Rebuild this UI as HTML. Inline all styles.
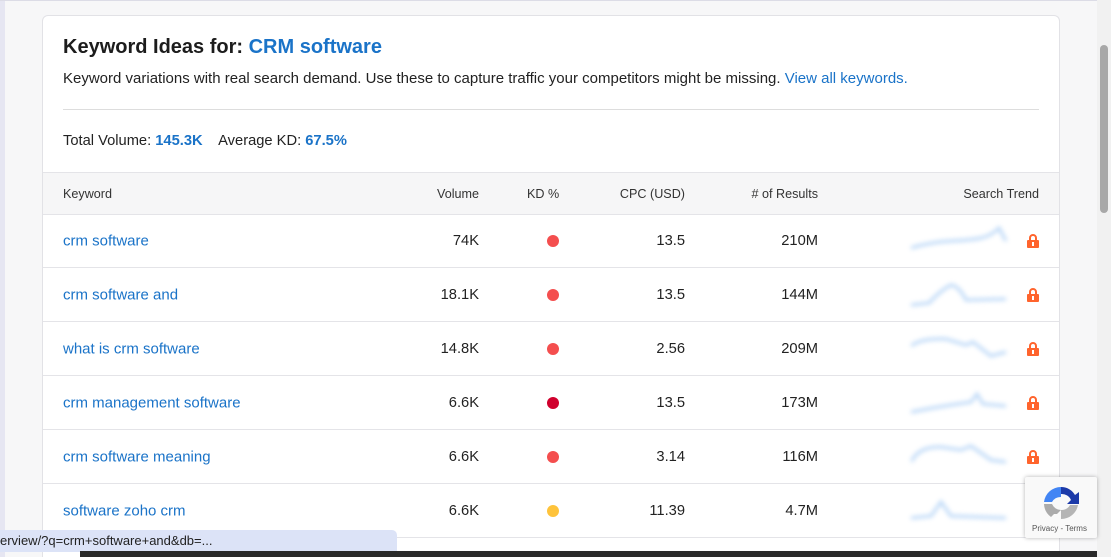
<!DOCTYPE html>
<html><head><style>
html,body{margin:0;width:1111px;height:557px;overflow:hidden}
body{background:#f7f7f8;font-family:"Liberation Sans",Arial,sans-serif;position:relative}
.lstrip{position:absolute;left:0;top:0;width:5px;height:557px;background:#e6e6f2}
.top{position:absolute;left:0;top:0;width:1097px;height:1px;background:#dcdce6}
.card{position:absolute;left:42px;top:15px;width:1016px;height:542px;background:#fff;border:1px solid #e2e2e6;border-bottom:none;border-radius:6px 6px 0 0;overflow:hidden}
h1{position:absolute;left:20px;top:20px;margin:0;font-size:20px;font-weight:bold;color:#1c1c1c}
h1 span{color:#1a73c8}
.sub{position:absolute;left:20px;top:54px;font-size:15px;color:#222}
.sub a{color:#1a73c8}
.hr{position:absolute;left:20px;right:20px;top:93px;height:1px;background:#ddd}
.tot{position:absolute;left:20px;top:117px;font-size:14.7px;color:#222}
.tot b{color:#1a73c8}
.th{position:absolute;left:0;right:0;top:156px;height:41px;background:#f6f6f7;border-top:1px solid #e4e4e8;border-bottom:1px solid #e4e4e8;font-size:12.6px;color:#333}
.row{position:absolute;left:0;right:0;height:53px;border-bottom:1px solid #e4e4e8;font-size:14.7px;color:#222}
.kw{font-size:15px}
.c{position:absolute;top:50%;transform:translateY(-50%)}
.kw{left:20px;color:#1a73c8}
.dot{width:12px;height:12px;border-radius:50%;position:absolute;left:504px;top:50%;transform:translateY(-50%)}
.lock{position:absolute;left:984px;top:50%;transform:translateY(-50%)}
.trend{position:absolute;left:868px;top:12px;filter:blur(2.5px);opacity:.8}
.sb{position:absolute;left:1097px;top:0;width:14px;height:557px;background:#f1f1f1}
.thumb{position:absolute;left:1100px;top:45px;width:8px;height:168px;background:#a8a8a8;border-radius:4px}
.status{position:absolute;left:0;top:530px;width:397px;height:22px;background:#dce3f7;border-radius:0 5px 0 0;font-size:13px;color:#222;line-height:22px}
.bar{position:absolute;left:80px;top:551px;width:1017px;height:6px;background:#2a2a2a}
.cap{position:absolute;left:1025px;top:477px;width:72px;height:61px;background:#f9f9f9;box-shadow:0 0 4px rgba(0,0,0,.3);border-radius:2px}
</style></head><body>
<div class="lstrip"></div><div class="top"></div>
<div class="card">
<h1>Keyword Ideas for: <span>CRM software</span></h1>
<div class="sub">Keyword variations with real search demand. Use these to capture traffic your competitors might be missing. <a>View all keywords.</a></div>
<div class="hr"></div>
<div class="tot">Total Volume: <b>145.3K</b>&nbsp;&nbsp;&nbsp; Average KD: <b>67.5%</b></div>
<div class="th">
<span class="c" style="left:20px">Keyword</span>
<span class="c" style="right:580px">Volume</span>
<span class="c" style="left:484px">KD %</span>
<span class="c" style="right:374px">CPC (USD)</span>
<span class="c" style="right:241px">&#35; of Results</span>
<span class="c" style="right:20px">Search Trend</span>
</div>
<div id="rows"></div>
</div>
<div class="sb"></div><div class="thumb"></div>
<div class="cap"><svg width="40" height="40" viewBox="0 0 40 40" style="position:absolute;left:16px;top:6px"><path d="M20 4a16 16 0 0 1 14 8l4-3v12H26l4-4a10 10 0 0 0-10-6z" fill="#1c3aa9"/><path d="M20 4v10a10 10 0 0 0-9 5H3A17 17 0 0 1 20 4z" fill="#4285f4"/><path d="M3 21h8a10 10 0 0 0 9 6l-4 4h-3l-3 3A17 17 0 0 1 3 21z" fill="#ababab"/><path d="M20 27a10 10 0 0 0 9-5h8a17 17 0 0 1-17 14z" fill="#b5b5b5"/></svg><div style="position:absolute;left:7px;top:47px;font-size:8px;color:#555">Privacy - Terms</div></div>
<div class="status">erview/?q=crm+software+and&amp;db=...</div>
<div class="bar"></div>
<script>
var d=[["crm software","74K","#f44e4e","13.5","210M","M0 22 Q20 16 40 15 T70 12 Q80 10 88 2 L95 15"],
["crm software and","18.1K","#f44e4e","13.5","144M","M0 25 L18 23 Q30 10 40 5 Q48 6 55 20 L95 19"],
["what is crm software","14.8K","#f44e4e","2.56","209M","M0 12 Q10 4 35 5 L55 11 L62 8 L80 22 L95 18"],
["crm management software","6.6K","#d0002d","13.5","173M","M0 24 Q20 20 40 17 L60 14 L66 6 L72 16 L95 18"],
["crm software meaning","6.6K","#f44e4e","3.14","116M","M0 20 Q8 4 30 5 L50 8 L60 4 L80 18 L95 20"],
["software zoho crm","6.6K","#fec33b","11.39","4.7M","M0 22 L20 20 L30 6 L40 20 L95 22"]];
var h="";d.forEach(function(r,i){h+='<div class="row" style="top:'+(198+54*i)+'px"><span class="c kw">'+r[0]+'</span><span class="c" style="right:580px">'+r[1]+'</span><div class="dot" style="background:'+r[2]+'"></div><span class="c" style="right:374px">'+r[3]+'</span><span class="c" style="right:241px">'+r[4]+'</span><svg class="trend" width="100" height="30"><path d="'+r[5]+'" fill="none" stroke="#a9cdf5" stroke-width="3"/></svg>'+(i<5?'<svg class="lock" width="12" height="14" viewBox="0 0 12 14"><path d="M3 6V4a3 3 0 0 1 6 0v2" fill="none" stroke="#ff642d" stroke-width="2"/><rect x="0" y="6" width="12" height="8" rx="1" fill="#ff642d"/><rect x="5" y="8" width="2" height="4" fill="#fff"/></svg>':'')+'</div>'});
document.getElementById("rows").innerHTML=h;
</script>
</body></html>
